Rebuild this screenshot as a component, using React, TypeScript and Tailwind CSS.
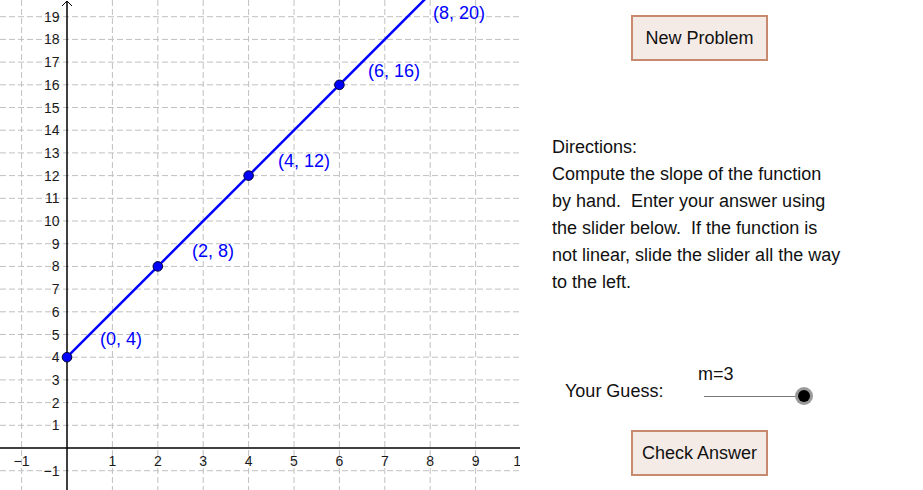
import React from "react";

const OX = 67;
const OY = 448;
const SX = 45.4;
const SY = 22.7;
const px = (x: number) => OX + x * SX;
const py = (y: number) => OY - y * SY;

function Graph() {
  const vx: number[] = [];
  for (let i = -1; i <= 10; i++) if (i !== 0) vx.push(i);
  const hy: number[] = [];
  for (let j = -1; j <= 21; j++) if (j !== 0) hy.push(j);
  const pts = [
    [0, 4],
    [2, 8],
    [4, 12],
    [6, 16],
    [8, 20],
  ];
  const labels = [
    { t: "(0, 4)", x: 100, y: 344.5 },
    { t: "(2, 8)", x: 192, y: 256.5 },
    { t: "(4, 12)", x: 278, y: 166.5 },
    { t: "(6, 16)", x: 368, y: 76.5 },
    { t: "(8, 20)", x: 433, y: 18.5 },
  ];
  return (
    <svg width={520} height={490} viewBox="0 0 520 490" className="block shrink-0">
      <defs>
        <clipPath id="c">
          <rect x={0} y={0} width={520} height={490} />
        </clipPath>
      </defs>
      <g clipPath="url(#c)" fontFamily="'Liberation Sans', Arial, sans-serif">
        {vx.map((i) => (
          <line key={"v" + i} x1={px(i)} y1={0} x2={px(i)} y2={490} stroke="#c0c0c0" strokeWidth={1} strokeDasharray="6 3" />
        ))}
        {hy.map((j) => (
          <line key={"h" + j} x1={0} y1={py(j)} x2={520} y2={py(j)} stroke="#c0c0c0" strokeWidth={1} strokeDasharray="6 3" />
        ))}
        <line x1={0} y1={OY} x2={520} y2={OY} stroke="#000" strokeWidth={1.5} />
        <line x1={OX} y1={1} x2={OX} y2={490} stroke="#000" strokeWidth={1.5} />
        <polyline points={`${OX - 5},6 ${OX},1 ${OX + 5},6`} fill="none" stroke="#000" strokeWidth={1} />
        {hy
          .filter((j) => j <= 19)
          .map((j) => (
            <text key={"yl" + j} x={59.5} y={py(j) + 5} fontSize={14} textAnchor="end" fill="#1a1a1a">
              {j < 0 ? "\u2212" + Math.abs(j) : j}
            </text>
          ))}
        {vx.map((i) => (
          <text key={"xl" + i} x={px(i)} y={465.5} fontSize={14} textAnchor="middle" fill="#1a1a1a">
            {i < 0 ? "\u2212" + Math.abs(i) : i}
          </text>
        ))}
        <line x1={px(0)} y1={py(4)} x2={px(9)} y2={py(22)} stroke="#0000ff" strokeWidth={2.5} />
        {pts.map(([x, y]) => (
          <circle key={x} cx={px(x)} cy={py(y)} r={4.8} fill="#0000ff" stroke="#000033" strokeWidth={1} />
        ))}
        {labels.map((l) => (
          <text key={l.t} x={l.x} y={l.y} fontSize={18} fill="#0000ff">
            {l.t}
          </text>
        ))}
      </g>
    </svg>
  );
}

export default function App() {
  return (
    <div className="flex w-[923px] h-[490px] overflow-hidden bg-white font-['Liberation_Sans',Arial,sans-serif] text-[#111]">
      <Graph />
      <div className="flex flex-col w-[403px]">
        <button className="mt-[15px] ml-[111px] w-[137px] h-[46px] border-2 border-[#c88a6e] bg-[#f5ebe6] text-[18px] leading-[20px] text-[#111]">
          New Problem
        </button>
        <div className="mt-[73px] ml-[32px] text-[18px] leading-[27px] whitespace-pre">
          {"Directions:\nCompute the slope of the function\nby hand.  Enter your answer using\nthe slider below.  If the function is\nnot linear, slide the slider all the way\nto the left."}
        </div>
        <div className="flex items-start mt-[71px] h-[41px]">
          <span className="ml-[45px] w-[133px] mt-[14px] text-[18px] leading-[20px]">Your Guess:</span>
          <div className="flex flex-col">
            <span className="text-[18px] leading-[18px] -mt-[2px]">m=3</span>
            <div className="relative ml-[6px] mt-[13px] w-[93px] h-px bg-[#777]">
              <div className="absolute left-[91px] top-[-9px] w-[18px] h-[18px] rounded-full bg-[#999] flex items-center justify-center">
                <div className="w-[12px] h-[12px] rounded-full bg-black" />
              </div>
            </div>
          </div>
        </div>
        <button className="mt-[22px] ml-[111px] w-[137px] h-[46px] border-2 border-[#c88a6e] bg-[#f5ebe6] text-[18px] leading-[20px] text-[#111]">
          Check Answer
        </button>
      </div>
    </div>
  );
}
